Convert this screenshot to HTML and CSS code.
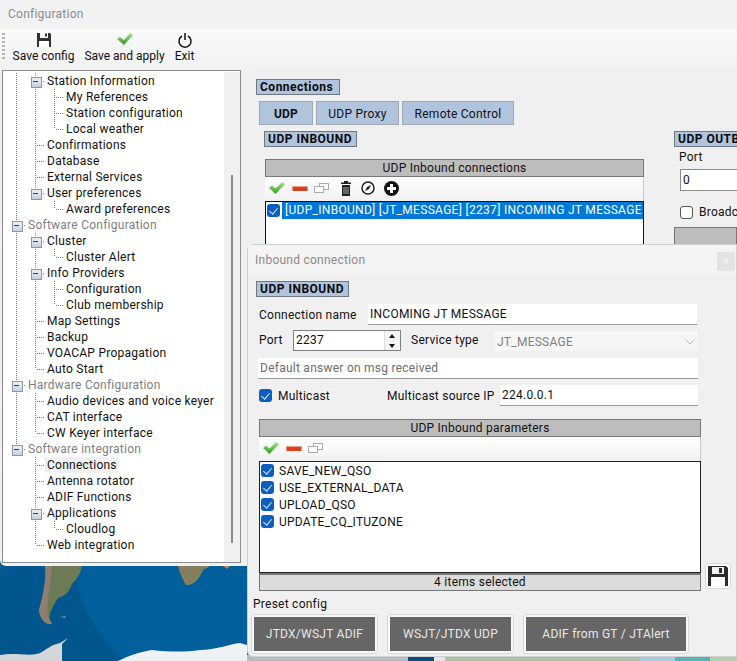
FILE: index.html
```html
<!DOCTYPE html>
<html lang="en">
<head>
<meta charset="utf-8">
<title>Configuration</title>
<link rel="stylesheet" href="styles.css">
</head>
<body>
<div class="desktop">
  <svg class="map" width="737" height="95" viewBox="0 566 737 95">
    <defs><linearGradient id="gt" x1="0" y1="0" x2="0" y2="1"><stop offset="0" stop-color="#a8e58c"/><stop offset="1" stop-color="#2f9a1e"/></linearGradient></defs>
    <rect x="0" y="566" width="737" height="95" fill="#01568d"/>
    <path d="M76 566V580C82 610 100 640 125 661H247V566Z" fill="#015f9b"/>
    <path d="M45 566C47 578 42 600 39 610C40 620 46 625 52 624L49 618C50 612 54 604 58 598C66 596 70 590 72 584C78 578 81 572 82 566Z" fill="#6c7a55"/>
    <path d="M45 566C47 578 42 600 39 610C40 620 46 625 52 624L48 616C46 606 50 586 52 566Z" fill="#8f7f70"/>
    <path d="M178 566C180 574 184 582 186 585C194 586 200 578 203 570L210 566Z" fill="#857f60"/>
    <path d="M223 566L227 569L230 566Z" fill="#a98a5c"/>
    <path d="M60 617L66 616L65 618Z" fill="#9b9170"/>
    <path d="M0 661V655C15 652 30 657 40 653C46 650 50 645 60 643L68 638L62 644L62 661Z" fill="#d3d7da"/>
    <path d="M118 661C130 655 140 652 152 650C170 652 185 652 200 650C215 650 230 644 240 643L247 645V661Z" fill="#eef2f4"/>
    <rect x="247" y="655" width="161" height="6" fill="#b8bdc0"/>
    <rect x="408" y="655" width="26" height="6" fill="#0a4f80"/>
    <rect x="434" y="655" width="11" height="6" fill="#e6e6e6"/>
    <rect x="445" y="655" width="195" height="6" fill="#a9c6a4"/>
    <rect x="640" y="655" width="35" height="6" fill="#a8cbe2"/>
    <rect x="675" y="655" width="35" height="6" fill="#53b5ba"/>
    <rect x="710" y="655" width="27" height="6" fill="#b3ccae"/>
  </svg>

  <div class="window">
    <div class="titlebar">Configuration</div>
    <div class="toolbar">
      <div class="grip"></div>
      <div class="tool tool-save">
        <svg class="tool-ico" width="16" height="16" viewBox="0 0 16 16"><path d="M1 1H14L15 2V15H1Z" fill="#333"/><rect x="4" y="1" width="8" height="5" fill="#f4f4f4"/><rect x="9" y="1.500" width="2" height="3" fill="#333"/><rect x="3" y="9" width="10" height="6" fill="#fff"/></svg>
        <span>Save config</span>
      </div>
      <div class="tool tool-apply">
        <svg class="tool-ico" width="18" height="16" viewBox="0 0 18 16"><path d="M1 7L4 5L8 8L14 1L17 3L8 13Z" fill="url(#gt)"/></svg>
        <span>Save and apply</span>
      </div>
      <div class="tool tool-exit">
        <svg class="tool-ico" width="16" height="16" viewBox="0 0 16 16"><path d="M5 4A6 6 0 1 0 11 4" fill="none" stroke="#111" stroke-width="1.500"/><path d="M8 1V8" stroke="#111" stroke-width="1.500"/></svg>
        <span>Exit</span>
      </div>
    </div>

    <div class="main">
      <div class="tree">
        <div class="row"><i class="c v"></i><i class="c box"></i><span>Station Information</span></div>
        <div class="row"><i class="c v"></i><i class="c v"></i><i class="c t"></i><span>My References</span></div>
        <div class="row"><i class="c v"></i><i class="c v"></i><i class="c t"></i><span>Station configuration</span></div>
        <div class="row"><i class="c v"></i><i class="c v"></i><i class="c l"></i><span>Local weather</span></div>
        <div class="row"><i class="c v"></i><i class="c t"></i><span>Confirmations</span></div>
        <div class="row"><i class="c v"></i><i class="c t"></i><span>Database</span></div>
        <div class="row"><i class="c v"></i><i class="c t"></i><span>External Services</span></div>
        <div class="row"><i class="c v"></i><i class="c box"></i><span>User preferences</span></div>
        <div class="row"><i class="c v"></i><i class="c"></i><i class="c l"></i><span>Award preferences</span></div>
        <div class="row"><i class="c box"></i><span class="group">Software Configuration</span></div>
        <div class="row"><i class="c v"></i><i class="c box"></i><span>Cluster</span></div>
        <div class="row"><i class="c v"></i><i class="c v"></i><i class="c l"></i><span>Cluster Alert</span></div>
        <div class="row"><i class="c v"></i><i class="c box"></i><span>Info Providers</span></div>
        <div class="row"><i class="c v"></i><i class="c v"></i><i class="c t"></i><span>Configuration</span></div>
        <div class="row"><i class="c v"></i><i class="c v"></i><i class="c l"></i><span>Club membership</span></div>
        <div class="row"><i class="c v"></i><i class="c t"></i><span>Map Settings</span></div>
        <div class="row"><i class="c v"></i><i class="c t"></i><span>Backup</span></div>
        <div class="row"><i class="c v"></i><i class="c t"></i><span>VOACAP Propagation</span></div>
        <div class="row"><i class="c v"></i><i class="c l"></i><span>Auto Start</span></div>
        <div class="row"><i class="c box"></i><span class="group">Hardware Configuration</span></div>
        <div class="row"><i class="c v"></i><i class="c t"></i><span>Audio devices and voice keyer</span></div>
        <div class="row"><i class="c v"></i><i class="c t"></i><span>CAT interface</span></div>
        <div class="row"><i class="c v"></i><i class="c l"></i><span>CW Keyer interface</span></div>
        <div class="row"><i class="c box last"></i><span class="group">Software integration</span></div>
        <div class="row"><i class="c"></i><i class="c t"></i><span class="current">Connections</span></div>
        <div class="row"><i class="c"></i><i class="c t"></i><span>Antenna rotator</span></div>
        <div class="row"><i class="c"></i><i class="c t"></i><span>ADIF Functions</span></div>
        <div class="row"><i class="c"></i><i class="c box"></i><span>Applications</span></div>
        <div class="row"><i class="c"></i><i class="c v"></i><i class="c l"></i><span>Cloudlog</span></div>
        <div class="row"><i class="c"></i><i class="c l"></i><span>Web integration</span></div>
        <div class="scrollbar"><div class="thumb"></div></div>
      </div>

      <div class="content">
        <div class="tag tag-page">Connections</div>
        <div class="tabs">
          <div class="tab tab-on">UDP</div>
          <div class="tab tab-proxy">UDP Proxy</div>
          <div class="tab tab-remote">Remote Control</div>
        </div>
        <div class="columns">
          <div class="col-in">
            <div class="tag tag-in">UDP INBOUND</div>
            <div class="head">UDP Inbound connections</div>
            <div class="iconbar">
              <svg width="18" height="14" viewBox="0 0 18 14"><path d="M1 7L4 4.500L7.500 7.500L14 1L17 3L7.500 13Z" fill="url(#gt)"/></svg>
              <svg width="16" height="14" viewBox="0 0 16 14"><rect x="0.500" y="5" width="15" height="5" fill="#d9411e"/><rect x="0.500" y="5" width="15" height="1" fill="#f2a08a"/></svg>
              <svg width="15" height="14" viewBox="0 0 15 14"><g fill="#fff" stroke="#aaa"><rect x="5.500" y="2.500" width="9" height="6"/><rect x="0.500" y="5.500" width="9" height="6"/></g></svg>
              <svg class="trash" width="10" height="15" viewBox="0 0 10 15"><path d="M3 0H7V1.500H10V3H0V1.500H3ZM1 4H9V15H1Z" fill="#222"/><path d="M3 6V13M5 6V13M7 6V13" stroke="#fff" stroke-width=".6"/></svg>
              <svg class="compass" width="14" height="14" viewBox="0 0 14 14"><circle cx="7" cy="7" r="6" fill="none" stroke="#222" stroke-width="1.500"/><path d="M4 10L6 6L10 4L8 8Z" fill="#222"/></svg>
              <svg class="plus" width="15" height="15" viewBox="0 0 15 15"><circle cx="7.500" cy="7.500" r="7.500" fill="#111"/><path d="M6 3H9V6H12V9H9V12H6V9H3V6H6Z" fill="#fff"/></svg>
            </div>
            <div class="list list-in">
              <div class="item"><i class="check"></i><span class="sel">[UDP_INBOUND] [JT_MESSAGE] [2237] INCOMING JT MESSAGE</span></div>
            </div>
          </div>
          <div class="col-out">
            <div class="tag tag-out">UDP OUTBOUND</div>
            <div class="out-port">Port</div>
            <div class="out-input">0</div>
            <div class="out-check"><i class="check-off"></i><span>Broadcast</span></div>
            <div class="out-head"></div>
          </div>
        </div>
      </div>
    </div>
  </div>

  <div class="dialog">
    <div class="dlg-title"><span>Inbound connection</span><div class="close">x</div></div>
    <div class="dlg-body">
      <div class="tag tag-dlg">UDP INBOUND</div>
      <div class="line line-name"><span class="lbl-name">Connection name</span><div class="field field-name">INCOMING JT MESSAGE</div></div>
      <div class="line line-port">
        <span class="lbl-port">Port</span>
        <div class="spin"><span>2237</span><div class="spin-btns"><b class="up"></b><b class="down"></b></div></div>
        <span class="lbl-service">Service type</span>
        <div class="combo"><span>JT_MESSAGE</span><svg width="10" height="6" viewBox="0 0 10 6"><path d="M.5.5L5 5L9.500.5" fill="none" stroke="#b8b8b8"/></svg></div>
      </div>
      <div class="field field-answer">Default answer on msg received</div>
      <div class="line line-multi">
        <i class="check"></i><span class="lbl-multi">Multicast</span>
        <span class="lbl-source">Multicast source IP</span>
        <div class="field field-ip">224.0.0.1</div>
      </div>
      <div class="head head-dlg">UDP Inbound parameters</div>
      <div class="iconbar iconbar-dlg">
        <svg width="18" height="14" viewBox="0 0 18 14"><path d="M1 7L4 4.500L7.500 7.500L14 1L17 3L7.500 13Z" fill="url(#gt)"/></svg>
        <svg width="16" height="14" viewBox="0 0 16 14"><rect x="0.500" y="5" width="15" height="5" fill="#d9411e"/><rect x="0.500" y="5" width="15" height="1" fill="#f2a08a"/></svg>
        <svg width="15" height="14" viewBox="0 0 15 14"><g fill="#fff" stroke="#aaa"><rect x="5.500" y="2.500" width="9" height="6"/><rect x="0.500" y="5.500" width="9" height="6"/></g></svg>
      </div>
      <div class="params">
        <div class="params-list">
          <div class="param"><i class="check"></i><span>SAVE_NEW_QSO</span></div>
          <div class="param"><i class="check"></i><span>USE_EXTERNAL_DATA</span></div>
          <div class="param"><i class="check"></i><span>UPLOAD_QSO</span></div>
          <div class="param"><i class="check"></i><span>UPDATE_CQ_ITUZONE</span></div>
        </div>
        <div class="params-foot">4 items selected</div>
        <div class="save-btn"><svg width="20" height="20" viewBox="0 0 20 20"><path d="M0 0H18L20 2V20H0Z" fill="#2b2b2b"/><rect x="4" y="1" width="12" height="7" fill="#f2f2f2"/><rect x="11" y="2" width="3" height="5" fill="#2b2b2b"/><rect x="3" y="11" width="14" height="9" fill="#fff"/></svg></div>
      </div>
      <div class="preset">Preset config</div>
      <div class="presets">
        <div class="pbtn pbtn-a"><span>JTDX/WSJT ADIF</span></div>
        <div class="pbtn pbtn-b"><span>WSJT/JTDX UDP</span></div>
        <div class="pbtn pbtn-c"><span>ADIF from GT / JTAlert</span></div>
      </div>
    </div>
  </div>
</div>
</body>
</html>
```

FILE: styles.css
```css
* { box-sizing: border-box; }
html, body { margin: 0; padding: 0; }
body { font-family: Roboto, "Noto Sans", sans-serif; font-size: 12px; letter-spacing: .25px; color: #111; background: #01609c; }
i, b { display: block; font-style: normal; }

.desktop { position: relative; width: 737px; height: 661px; overflow: hidden; }
.map { position: absolute; left: 0; top: 566px; }

.window { position: relative; width: 737px; height: 566px; background: #f0f0f0; border-radius: 0 0 0 6px; overflow: hidden; display: flex; flex-direction: column; }
.titlebar { height: 29px; padding: 6px 0 0 8px; color: #8a8a8a; font-size: 12px; line-height: 16px; background: #f2f2f2; }
.toolbar { height: 41px; background: linear-gradient(#fafafa, #f1f1f1); display: flex; padding-left: 2px; }
.grip { width: 3px; height: 28px; margin-top: 4px; background: repeating-linear-gradient(#b5b5b5 0 2px, transparent 2px 4px); flex: none; }
.tool { display: flex; flex-direction: column; align-items: center; height: 41px; line-height: 16px; white-space: nowrap; letter-spacing: 0; }
.tool-save { width: 61px; margin-left: 8px; }
.tool-apply { width: 79px; margin-left: 11px; }
.tool-exit { width: 19px; margin-left: 11px; }
.tool-ico { display: block; margin-top: 3px; height: 16px; margin-bottom: 0; }

.main { flex: 1; display: flex; min-height: 0; }

.tree { position: relative; margin-left: 2px; width: 239px; height: 493px; background: #fff; border: 1px solid #8c8c8c; padding: 2px 0 0 4px; flex: none; }
.row { display: flex; align-items: center; height: 16px; line-height: 16px; white-space: nowrap; }
.row > span { padding: 0 2px; }
.row .group { color: #808080; }
.row .current { background: #f1f1f1; }
.c { position: relative; width: 19px; height: 16px; flex: none; }
.v::before, .t::before, .l::before, .box::before {
  content: ""; position: absolute; left: 9px; top: 0; width: 1px; height: 16px;
  background: repeating-linear-gradient(#7f7f7f 0 1px, transparent 1px 2px);
}
.l::before, .last::before { height: 8px; }
.t::after, .l::after {
  content: ""; position: absolute; left: 10px; top: 8px; width: 8px; height: 1px;
  background: repeating-linear-gradient(90deg, transparent 0 1px, #7f7f7f 1px 2px);
}
.box { background: repeating-linear-gradient(90deg, #7f7f7f 0 1px, transparent 1px 2px) 15px 8px / 3px 1px no-repeat; }
.box::after {
  content: ""; position: absolute; left: 5px; top: 4px; width: 9px; height: 9px;
  background:
    linear-gradient(#2b3f6b, #2b3f6b) 1px 3px / 5px 1px no-repeat,
    linear-gradient(#eef1f7, #c5cfe0);
  border: 1px solid #8b96ab;
}
.scrollbar { position: absolute; right: 0; top: 1px; bottom: 0; width: 16px; background: #f0f0f0; }
.thumb { position: absolute; left: 7px; top: 103px; width: 2px; height: 368px; background: #8a8a8a; }

.content { position: relative; flex: 1; min-width: 0; padding: 9px 0 0 15px; overflow: hidden; }
.tag { background: #b0c4de; border: 1px solid #6e7784; font-weight: 700; letter-spacing: .5px; line-height: 14px; height: 16px; padding: 0 3px; color: #0b0b0b; white-space: nowrap; overflow: hidden; }
.tag-page { width: 84px; }
.tag-in, .tag-dlg { width: 93px; }
.tabs { display: flex; gap: 3px; margin: 6px 0 0 3px; }
.tab { height: 24px; line-height: 24px; background: #b0c4de; border: 1px solid #a2a8b0; text-align: center; }
.tab-on { width: 54px; font-weight: 700; }
.tab-proxy { width: 83px; }
.tab-remote { width: 112px; }
.columns { display: flex; margin-top: 6px; }
.col-in { width: 418px; padding-left: 8px; flex: none; }
.head { background: #bdbdbd; border: 1px solid #777; height: 18px; line-height: 16px; text-align: center; width: 379px; margin-top: 12px; margin-left: 1px; }
.iconbar { display: flex; align-items: center; gap: 6px; height: 24px; width: 379px; margin-left: 1px; padding: 0 0 2px 3px; background: linear-gradient(#fff, #f1f1f1); border-right: 1px solid #c8c8c8; }
.trash { margin-left: 6px; }
.compass { margin-left: 4px; }
.plus { margin-left: 3px; }
.list-in { width: 379px; margin-left: 1px; height: 60px; border: 1px solid #111; background: #fff; }
.item { display: flex; align-items: center; height: 17px; padding-left: 1px; white-space: nowrap; }
.check { width: 13px; height: 13px; border-radius: 3px; background: #0b5fc0; position: relative; flex: none; }
.check::after { content: ""; position: absolute; left: 4px; top: 2px; width: 4px; height: 7px; border: solid #dbe8f8; border-width: 0 1px 1px 0; transform: rotate(40deg); }
.sel { margin-left: 2px; background: #0078d7; color: #fff; flex: 1; line-height: 17px; padding-left: 3px; letter-spacing: .3px; }
.col-out { position: relative; flex: none; width: 63px; }
.tag-out { width: 90px; }
.out-port { margin: 2px 0 0 5px; line-height: 16px; }
.out-input { margin: 4px 0 0 6px; height: 22px; width: 90px; border: 1px solid #8c8c8c; background: #fff; padding-left: 2px; line-height: 20px; }
.out-check { display: flex; align-items: center; gap: 6px; margin: 13px 0 0 6px; line-height: 16px; white-space: nowrap; }
.check-off { width: 13px; height: 13px; border: 1px solid #555; border-radius: 3px; background: #fbfbfb; flex: none; }
.out-head { height: 18px; margin-top: 7px; background: #bdbdbd; border: 1px solid #777; }

.dialog { position: absolute; left: 247px; top: 244px; width: 490px; height: 413px; background: #f0f0f0; border: 1px solid #cfcfcf; border-radius: 6px 0 0 6px; }
.dlg-title { height: 30px; background: #f4f4f4; color: #8a8a8a; display: flex; justify-content: space-between; align-items: flex-start; padding: 7px 1px 0 7px; line-height: 16px; }
.close { width: 18px; height: 19px; background: #e3e3e3; color: #f4f4f4; text-align: center; font-size: 11px; line-height: 17px; }
.dlg-body { padding: 6px 0 0 8px; }
.line { display: flex; align-items: center; }
.field { background: #fff; border-bottom: 1px solid #9a9a9a; height: 21px; line-height: 21px; padding-left: 2px; }
.line-name { margin: 7px 0 0 3px; }
.lbl-name { width: 109px; }
.field-name { width: 329px; }
.line-port { margin: 5px 0 0 3px; align-items: flex-start; }
.lbl-port { width: 34px; line-height: 20px; }
.spin { width: 108px; height: 21px; border: 1px solid #808080; background: #fff; display: flex; justify-content: space-between; line-height: 18px; padding-left: 2px; }
.spin-btns { width: 16px; display: flex; flex-direction: column; background: #f4f4f4; border-left: 1px solid #ddd; }
.up, .down { height: 9.500px; position: relative; }
.up::after { content: ""; position: absolute; left: 4px; top: 3px; border: 3.500px solid transparent; border-top: 0; border-bottom: 4px solid #111; }
.down::after { content: ""; position: absolute; left: 4px; top: 3px; border: 3.500px solid transparent; border-bottom: 0; border-top: 4px solid #111; }
.lbl-service { margin-left: 10px; width: 83px; line-height: 20px; }
.combo { width: 204px; height: 20px; margin-top: 1px; background: #f6f6f6; color: #808080; display: flex; justify-content: space-between; align-items: center; padding: 1px 3px 0; }
.field-answer { width: 440px; margin: 7px 0 0 2px; color: #6d6d6d; }
.line-multi { margin: 6px 0 0 3px; }
.lbl-multi { margin-left: 6px; width: 109px; }
.lbl-source { width: 113px; }
.field-ip { width: 198px; }
.head-dlg { width: 442px; margin: 13px 0 0 3px; }
.iconbar-dlg { width: 442px; margin-left: 3px; }
.params { position: relative; width: 442px; margin-left: 3px; }
.params-list { height: 112px; border: 1px solid #222; background: #fff; }
.param { display: flex; align-items: center; height: 17px; padding-left: 1px; gap: 5px; }
.params-foot { height: 18px; background: #dcdcdc; border: 1px solid #777; border-top-width: 2px; text-align: center; line-height: 15px; }
.save-btn { position: absolute; left: 446px; top: 102px; width: 26px; height: 26px; background: #fafafa; border: 1px solid #d8d8d8; border-radius: 3px; display: flex; align-items: center; justify-content: center; }
.preset { margin: 5px 0 0 -3px; line-height: 16px; }
.presets { display: flex; margin: 2px 0 0 -5px; gap: 9px; }
.pbtn { height: 40px; border: 1px solid #d8d8d8; border-radius: 3px; background: #f8f8f8; padding: 2px; display: flex; }
.pbtn span { flex: 1; background: #666; color: #e8e8e8; display: flex; align-items: center; justify-content: center; }
.pbtn-a { width: 127px; }
.pbtn-b { width: 127px; }
.pbtn-c { width: 166px; }
```
